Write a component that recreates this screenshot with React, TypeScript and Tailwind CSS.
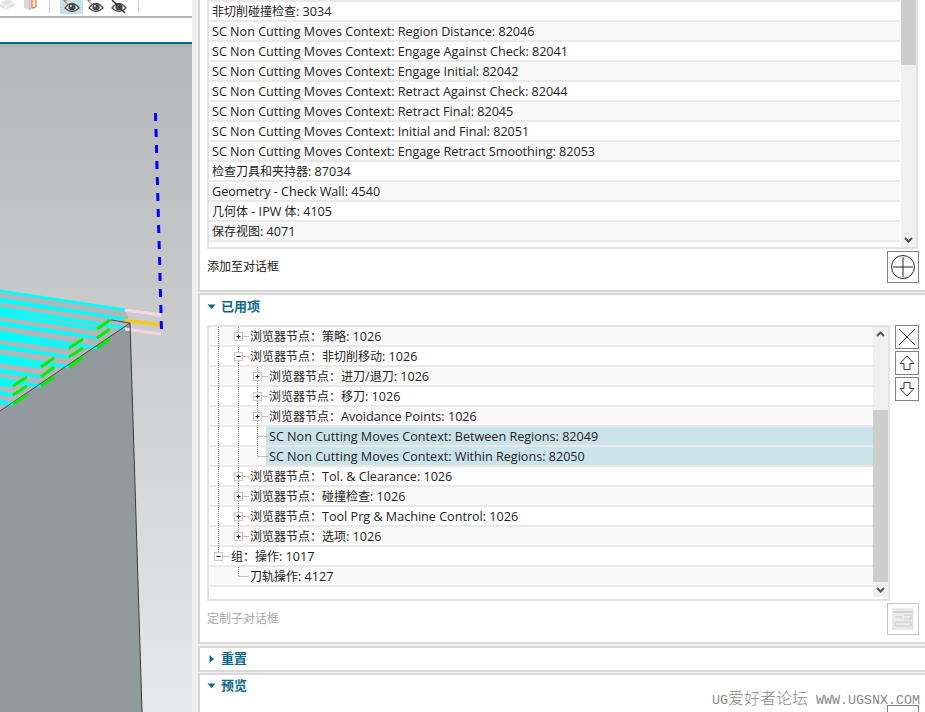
import React from "react";

const FONT = { fontFamily: '"Open Sans","Noto Sans CJK SC",sans-serif' };

function Mixed({ text }: { text: string }) {
  const parts = text.split(/([\u3000-\u9fff\uff00-\uffef]+)/).filter(Boolean);
  return (
    <>
      {parts.map((p, i) =>
        /[\u3000-\u9fff\uff00-\uffef]/.test(p) ? (
          <span key={i} className="text-[12px]">
            {p}
          </span>
        ) : (
          <span key={i}>{p}</span>
        )
      )}
    </>
  );
}

function Eye({ strike, axes = true }: { strike?: boolean; axes?: boolean }) {
  return (
    <svg width="24" height="16" viewBox="0 0 24 16" className="block">
      {axes && (
        <g fill="none" strokeWidth="1">
          <path d="M4 1 L4 -3" stroke="#1e88e5" />
          <path d="M4.5 1 L10 -2" stroke="#22b14c" />
          <path d="M4 1 L9 5" stroke="#e53935" />
        </g>
      )}
      <path d="M5 8 Q12 -1 19 8 Q12 15 5 8 Z" fill="#fff" stroke="#555" strokeWidth="1.3" />
      <circle cx="12" cy="7" r="3.6" fill="#4a4a4a" />
      <circle cx="11" cy="6" r="1" fill="#ddd" />
      {strike && <path d="M5 0 L18 13" stroke="#333" strokeWidth="1.4" />}
    </svg>
  );
}

function Toolbar() {
  return (
    <div className="h-[18px] bg-white border-b-2 border-[#b4b4b4] flex items-start overflow-hidden">
      <svg width="14" height="14" viewBox="0 0 14 14" className="block shrink-0 -mt-[3px]">
        <path d="M0 6 L8 2 L14 5 L14 9 L6 13 L0 10 Z" fill="#e3e3e3" />
        <path d="M0 6 L6 9 L14 5 M6 9 L6 13" stroke="#fff" fill="none" />
      </svg>
      <svg width="14" height="11" viewBox="0 0 14 11" className="block shrink-0 ml-[9px]">
        <path d="M1 0 L1 8 L7 10 L13 8 L13 0 Z" fill="#d8d8d8" />
        <path d="M7 0 L7 10" stroke="#b9b9b9" />
        <path d="M9 0 L9 8 L13 7 L13 0" fill="#fbe6d5" stroke="#e0722c" />
      </svg>
      <div className="w-px h-[13px] bg-[#d0d0d0] ml-[12px]" />
      <div className="ml-[10px] w-[23px] h-[14px] bg-[#c6e1e8] overflow-hidden">
        <Eye />
      </div>
      <div className="ml-px w-[24px] h-[14px] overflow-hidden">
        <Eye />
      </div>
      <div className="-ml-px w-[24px] h-[14px] overflow-hidden">
        <Eye strike axes={false} />
      </div>
      <div className="w-px h-[13px] bg-[#d0d0d0] ml-[7px]" />
    </div>
  );
}

function Model() {
  const ends: [number, number][] = [
    [125, 310],
    [125, 319],
    [125, 328],
    [97, 329],
    [97, 338],
    [97, 348],
    [69, 348],
    [69, 357],
    [69, 367],
    [41, 367],
    [41, 377],
    [41, 386],
    [13, 386],
    [13, 395],
    [13, 404],
  ];
  const greens = [
    [97, 329, 110, 320],
    [97, 338, 110, 329],
    [97, 348, 110, 339],
    [69, 348, 83, 339],
    [69, 357, 83, 348],
    [69, 367, 83, 357],
    [41, 367, 54, 358],
    [41, 377, 54, 367],
    [41, 386, 54, 377],
    [13, 386, 27, 377],
    [13, 395, 27, 386],
    [13, 404, 27, 395],
  ];
  return (
    <svg width="192" height="668" viewBox="0 44 192 668" className="block">
      <path d="M0 291 L125 310 L130 323 L0 411 Z" fill="#b4b5b7" />
      <path d="M0 411 L130 323 L142 712 L0 712 Z" fill="#919a9c" />
      {ends.map(([x, y], i) => {
        const y0 = y - x * 0.152;
        const w = i === 0 ? 1.6 : 2.6;
        return (
          <polygon
            key={i}
            points={`0,${y0 - w} ${x},${y - 1.6} ${x},${y + 1.6} 0,${y0 + w}`}
            fill="#00ffff"
          />
        );
      })}
      <path d="M125 310 L161 315" stroke="#f7d6e4" strokeWidth="3" />
      <path d="M125 320 L161 325" stroke="#ffc800" strokeWidth="3" />
      <path d="M125 329 L161 334" stroke="#f7d6e4" strokeWidth="3" />
      <path d="M111 320 L130 323 L0 411" stroke="#4a4a4a" strokeWidth="1" fill="none" />
      <path d="M130 323 L142 712" stroke="#3c3c3c" strokeWidth="1" fill="none" />
      {greens.map(([a, b, c, d], i) => (
        <path key={i} d={`M${a} ${b} L${c} ${d}`} stroke="#00ee00" strokeWidth="3" fill="none" />
      ))}
      <path d="M155.5 113 L161.5 330" stroke="#0000ff" strokeWidth="3" strokeDasharray="8 8" fill="none" />
    </svg>
  );
}

function Chevron({ up }: { up?: boolean }) {
  return (
    <svg width="15" height="15" viewBox="0 0 15 15" className="block">
      <path
        d={up ? "M4 9 L7.5 5.5 L11 9" : "M4 6 L7.5 9.5 L11 6"}
        fill="none"
        stroke="#555"
        strokeWidth="2"
      />
    </svg>
  );
}

function Row({
  text,
  alt,
  selected,
  pl = 3,
  children,
}: {
  text: string;
  alt?: boolean;
  selected?: boolean;
  pl?: number;
  children?: React.ReactNode;
}) {
  const bg = alt ? "bg-[#fafafa]" : "bg-white";
  return (
    <div className={`relative h-[20px] border-b-2 border-[#e9e9e9] shrink-0 ${bg}`}>
      {selected && <div className="absolute left-[57px] right-0 top-0 h-[18px] bg-[#cbe4ea]" />}
      {children}
      <div
        className="absolute top-0 left-0 right-0 h-[19px] text-[12.6px] leading-[20px] text-[#222] whitespace-nowrap"
        style={{ paddingLeft: pl }}
      >
        <Mixed text={text} />
      </div>
    </div>
  );
}

type TreeDef = {
  text: string;
  level: 0 | 1 | 2;
  box?: "+" | "-";
  v: [number, number, number][];
  leaf?: boolean;
  selected?: boolean;
};

function Gutter({ d }: { d: TreeDef }) {
  const boxX = d.level === 0 ? 5.5 : d.level === 1 ? 25.5 : 44.5;
  const vx = boxX + 4;
  const textX = d.level === 0 ? 22 : d.level === 1 ? 41 : 60;
  return (
    <svg width="64" height="20" viewBox="0 0 64 20" className="absolute left-0 top-0 block">
      {d.v.map(([x, a, b], i) => (
        <path key={i} d={`M${x} ${a} L${x} ${b}`} stroke="#8a8a8a" strokeDasharray="1 1" fill="none" />
      ))}
      <path
        d={`M${d.box ? vx + 5 : vx} 9.5 L${textX - 1} 9.5`}
        stroke="#8a8a8a"
        strokeDasharray="1 1"
        fill="none"
      />
      {d.box && (
        <g>
          <rect x={boxX} y="5.5" width="8" height="8" fill="#fff" stroke="#c8c8c8" />
          <path d={`M${boxX + 2} 9.5 L${boxX + 6} 9.5`} stroke="#111" />
          {d.box === "+" && <path d={`M${boxX + 4} 7.5 L${boxX + 4} 11.5`} stroke="#111" />}
        </g>
      )}
    </svg>
  );
}

const A = 9.5;
const B = 29.5;
const C = 48.5;
const treeRows: TreeDef[] = [
  { text: "浏览器节点：策略: 1026", level: 1, box: "+", v: [[A, 0, 20], [B, 0, 5]] },
  { text: "浏览器节点：非切削移动: 1026", level: 1, box: "-", v: [[A, 0, 20], [B, 0, 20]] },
  { text: "浏览器节点：进刀/退刀: 1026", level: 2, box: "+", v: [[A, 0, 20], [B, 0, 20], [C, 0, 20]] },
  { text: "浏览器节点：移刀: 1026", level: 2, box: "+", v: [[A, 0, 20], [B, 0, 20], [C, 0, 20]] },
  { text: "浏览器节点：Avoidance Points: 1026", level: 2, box: "+", v: [[A, 0, 20], [B, 0, 20], [C, 0, 20]] },
  { text: "SC Non Cutting Moves Context: Between Regions: 82049", level: 2, leaf: true, selected: true, v: [[A, 0, 20], [B, 0, 20], [C, 0, 20]] },
  { text: "SC Non Cutting Moves Context: Within Regions: 82050", level: 2, leaf: true, selected: true, v: [[A, 0, 20], [B, 0, 20], [C, 0, 10]] },
  { text: "浏览器节点：Tol. & Clearance: 1026", level: 1, box: "+", v: [[A, 0, 20], [B, 0, 20]] },
  { text: "浏览器节点：碰撞检查: 1026", level: 1, box: "+", v: [[A, 0, 20], [B, 0, 20]] },
  { text: "浏览器节点：Tool Prg & Machine Control: 1026", level: 1, box: "+", v: [[A, 0, 20], [B, 0, 20]] },
  { text: "浏览器节点：选项: 1026", level: 1, box: "+", v: [[A, 0, 20], [B, 0, 10]] },
  { text: "组：操作: 1017", level: 0, box: "-", v: [[A, 0, 5]] },
  { text: "刀轨操作: 4127", level: 1, leaf: true, v: [[B, 0, 10]] },
];

const listRows = [
  "非切削碰撞检查: 3034",
  "SC Non Cutting Moves Context: Region Distance: 82046",
  "SC Non Cutting Moves Context: Engage Against Check: 82041",
  "SC Non Cutting Moves Context: Engage Initial: 82042",
  "SC Non Cutting Moves Context: Retract Against Check: 82044",
  "SC Non Cutting Moves Context: Retract Final: 82045",
  "SC Non Cutting Moves Context: Initial and Final: 82051",
  "SC Non Cutting Moves Context: Engage Retract Smoothing: 82053",
  "检查刀具和夹持器: 87034",
  "Geometry - Check Wall: 4540",
  "几何体 - IPW 体: 4105",
  "保存视图: 4071",
];

function Header({ text, open, h = 30, pb = 0 }: { text: string; open?: boolean; h?: number; pb?: number }) {
  return (
    <div className="flex items-center shrink-0" style={{ height: h, paddingBottom: pb }}>
      <svg width="10" height="8" viewBox="0 0 10 8" className="block mr-[4px]">
        {open ? <path d="M0.5 1.5 L8.5 1.5 L4.5 6 Z" fill="#0b6a8a" /> : <path d="M2.5 0 L7 4 L2.5 8 Z" fill="#0b6a8a" />}
      </svg>
      <span className="text-[13px] font-bold text-[#0b6a8a]">{text}</span>
    </div>
  );
}

function IconBtn({ children, size = 24, muted }: { children: React.ReactNode; size?: number; muted?: boolean }) {
  return (
    <div
      className={`flex items-center justify-center bg-white border shrink-0 ${muted ? "border-[#c4c4c4]" : "border-[#808080]"}`}
      style={{ width: size === 24 ? 24 : 32, height: size }}
    >
      {children}
    </div>
  );
}

export default function App() {
  return (
    <div className="w-[925px] h-[712px] overflow-hidden flex bg-[#f0f0f0]" style={FONT}>
      <div className="w-[192px] shrink-0 flex flex-col">
        <Toolbar />
        <div className="h-[24px] bg-white" />
        <div className="h-[2px] bg-[#0a6585]" />
        <div className="flex-1 overflow-hidden bg-[linear-gradient(180deg,#b5b6b8,#e7e8ea)]">
          <Model />
        </div>
      </div>

      <div className="flex-1 pl-[6px] flex flex-col gap-px min-w-0">
        {/* upper panel */}
        <div className="h-[292px] shrink-0 bg-white border-l-2 border-b-2 border-[#d9d9d9] pl-[7px] pr-[6px] flex flex-col">
          <div className="h-[249px] shrink-0 mr-[1px] border-l-2 border-r-2 border-b-2 border-[#e3e3e3] flex overflow-hidden">
            <div className="flex-1 min-w-0 flex flex-col overflow-hidden">
              <div className="h-[2px] shrink-0 border-b-2 border-[#e9e9e9]" />
              {listRows.map((t, i) => (
                <Row key={t} text={t} alt={i % 2 === 1} />
              ))}
              <div className="h-[20px] shrink-0 relative">
                <div className="absolute left-[3px] top-[2px] text-[12.6px] leading-[20px] text-[#222]">
                  <Mixed text="刀轨操作: 4127" />
                </div>
              </div>
            </div>
            <div className="w-[15px] ml-[1px] shrink-0 bg-[#f0f0f0] flex flex-col">
              <div className="h-[65px] bg-[#cdcdcd]" />
              <div className="flex-1" />
              <Chevron />
            </div>
          </div>
          <div className="flex items-start justify-between">
            <div className="mt-[8px] text-[12.6px] leading-[20px] text-[#222]">
              <Mixed text="添加至对话框" />
            </div>
            <div className="mt-[2px]">
              <IconBtn size={32}>
                <svg width="26" height="26" viewBox="0 0 26 26" className="block">
                  <circle cx="13" cy="13" r="11.5" fill="none" stroke="#222" />
                  <path d="M13 3 L13 23 M3 13 L23 13" stroke="#222" />
                </svg>
              </IconBtn>
            </div>
          </div>
        </div>

        {/* applied panel */}
        <div className="h-[351px] shrink-0 bg-white border-2 border-r-0 border-[#d9d9d9] pl-[7px] pr-[6px] flex flex-col">
          <Header text="已用项" open pb={6} />
          <div className="flex gap-[5px]">
            <div className="w-[683px] h-[276px] shrink-0 border-2 border-[#e3e3e3] flex">
              <div className="flex-1 min-w-0 flex flex-col">
                {treeRows.map((d, i) => (
                  <Row
                    key={d.text}
                    text={d.text}
                    alt={i % 2 === 0}
                    selected={d.selected}
                    pl={d.level === 0 ? 22 : d.level === 1 ? 41 : 60}
                  >
                    <Gutter d={d} />
                  </Row>
                ))}
              </div>
              <div className="w-[15px] h-[270px] shrink-0 bg-[#f0f0f0] flex flex-col">
                <Chevron up />
                <div className="h-[68px]" />
                <div className="h-[172px] bg-[#cdcdcd]" />
                <Chevron />
              </div>
            </div>
            <div className="flex flex-col gap-[2px]">
              <IconBtn>
                <svg width="20" height="20" viewBox="0 0 20 20" className="block">
                  <path d="M2 2 L18 18 M18 2 L2 18" stroke="#333" fill="none" />
                </svg>
              </IconBtn>
              <IconBtn>
                <svg width="18" height="18" viewBox="0 0 18 18" className="block">
                  <path d="M9 2 L16 9.5 L12 9.5 L12 15.5 L6 15.5 L6 9.5 L2 9.5 Z" fill="#fff" stroke="#333" />
                </svg>
              </IconBtn>
              <IconBtn>
                <svg width="18" height="18" viewBox="0 0 18 18" className="block">
                  <path d="M9 16 L16 8.5 L12 8.5 L12 2.5 L6 2.5 L6 8.5 L2 8.5 Z" fill="#fff" stroke="#333" />
                </svg>
              </IconBtn>
            </div>
          </div>
          <div className="flex items-start justify-between mt-[2px]">
            <div className="mt-[6px] text-[12.6px] leading-[20px] text-[#a8a8a8]">
              <Mixed text="定制子对话框" />
            </div>
            <IconBtn size={32} muted>
              <svg width="22" height="22" viewBox="0 0 22 22" className="block">
                <rect x="1" y="1" width="20" height="20" fill="#ececec" stroke="#dcdcdc" />
                <path d="M1 4 L21 4" stroke="#d0d0d0" strokeWidth="2" />
                <path d="M3 9 L10 9 M12 7 L19 7 L19 11 L12 11 M3 14 L19 14 L19 18 L3 18 Z" stroke="#c8c8c8" fill="none" />
              </svg>
            </IconBtn>
          </div>
        </div>

        {/* reset */}
        <div className="h-[26px] mt-px shrink-0 bg-white border-2 border-r-0 border-[#d9d9d9] pl-[7px] overflow-hidden flex flex-col">
          <Header text="重置" h={22} />
        </div>

        {/* preview */}
        <div className="relative flex-1 min-h-0 bg-white border-l-2 border-t-2 border-[#d9d9d9] pl-[7px] pr-[6px] overflow-hidden">
          <Header text="预览" open h={22} />
          <div className="flex justify-end mt-[8px]">
            <IconBtn size={32}>
              <span />
            </IconBtn>
          </div>
          <div
            className="absolute right-[5px] top-[16px] text-[13.33px] leading-[18px] text-[#888] whitespace-nowrap"
            style={{ fontFamily: '"Liberation Mono","Noto Sans CJK SC",monospace' }}
          >
            UG<span className="text-[16px] font-light text-[#8a8a8a]">爱好者论坛</span> WWW.UGSNX.COM
          </div>
        </div>
      </div>
    </div>
  );
}
